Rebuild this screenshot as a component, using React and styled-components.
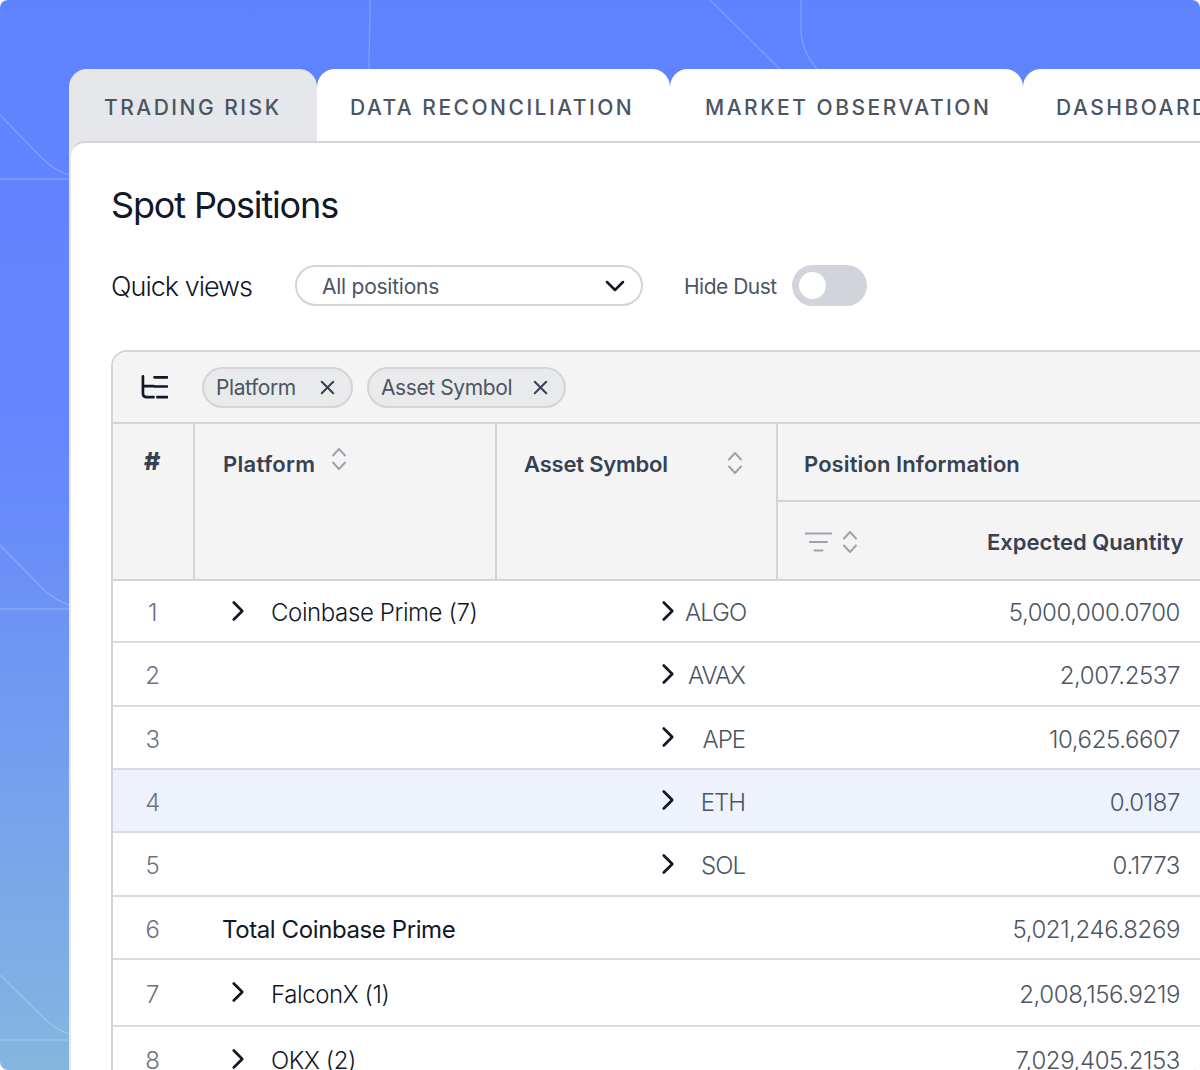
import React from "react";
import styled, { createGlobalStyle } from "styled-components";
import { ChevronDown, ChevronRight, X } from "lucide-react";

const GlobalStyle = createGlobalStyle`
  html, body {
    margin: 0;
    padding: 0;
    background: white;
  }
  body {
    font-family: "Inter", "Liberation Sans", sans-serif;
  }
`;

const COLUMNS = "82px 302px 281px 440px";

const rows = [
  { id: 1, platform: "Coinbase Prime (7)", expandable: true, asset: "ALGO", quantity: "5,000,000.0700", height: 62 },
  { id: 2, asset: "AVAX", quantity: "2,007.2537", height: 64 },
  { id: 3, asset: "APE", quantity: "10,625.6607", height: 63 },
  { id: 4, asset: "ETH", quantity: "0.0187", height: 63, selected: true },
  { id: 5, asset: "SOL", quantity: "0.1773", height: 64 },
  { id: 6, total: "Total Coinbase Prime", quantity: "5,021,246.8269", height: 63 },
  { id: 7, platform: "FalconX (1)", expandable: true, quantity: "2,008,156.9219", height: 67 },
  { id: 8, platform: "OKX (2)", expandable: true, quantity: "7,029,405.2153", height: 66 },
];

const tabs = [
  { label: "TRADING RISK", width: 248, pad: 35, active: true },
  { label: "DATA RECONCILIATION", width: 353, pad: 33 },
  { label: "MARKET OBSERVATION", width: 353, pad: 35 },
  { label: "DASHBOARD", width: 300, pad: 33 },
];

function App() {
  return (
    <>
      <GlobalStyle />
      <Page>
        <Lines viewBox="0 0 1200 1070" fill="none">
          <path d="M370 0 C371 10 369 20 369 69" />
          <path d="M710 0 L780 69" />
          <path d="M801 0 V30 C801 45 808 58 817 69" />
          <path d="M0 115 L42 158 C50 166 58 172 69 175 M0 179 H69" />
          <path d="M0 545 L44 590 C52 597 60 602 69 605 M0 609 H69" />
          <path d="M0 975 L44 1018 C52 1026 60 1031 69 1034 M0 1040 H69" />
        </Lines>
        <TabBar>
          {tabs.map((tab) => (
            <Tab key={tab.label} $active={tab.active} $width={tab.width} $pad={tab.pad}>
              {tab.label}
            </Tab>
          ))}
        </TabBar>
        <Panel>
          <Title>Spot Positions</Title>
          <Controls>
            <ViewsLabel>Quick views</ViewsLabel>
            <Select>
              <SelectValue>All positions</SelectValue>
              <ChevronDown size={32} strokeWidth={1.9} color="#111827" />
            </Select>
            <DustLabel>Hide Dust</DustLabel>
            <Toggle>
              <Knob />
            </Toggle>
          </Controls>
          <TableCard>
            <Toolbar>
              <GroupIcon />
              <Chip $width={151}>
                Platform
                <X size={23} strokeWidth={2.1} color="#374151" />
              </Chip>
              <Chip $width={199}>
                Asset Symbol
                <X size={23} strokeWidth={2.1} color="#374151" />
              </Chip>
            </Toolbar>
            <TableHead>
              <HashCell>#</HashCell>
              <PlatformHead>
                Platform
                <SortIcon />
              </PlatformHead>
              <AssetHead>
                Asset Symbol
                <SortIcon />
              </AssetHead>
              <GroupHead>
                <GroupTitle>Position Information</GroupTitle>
                <SubHead>
                  <FilterIcon />
                  <SortIcon />
                  <SubHeadLabel>Expected Quantity</SubHeadLabel>
                </SubHead>
              </GroupHead>
            </TableHead>
            {rows.map((row) => (
              <Row key={row.id} $height={row.height} $selected={row.selected}>
                <RowNumber>{row.id}</RowNumber>
                {row.total ? (
                  <TotalCell>{row.total}</TotalCell>
                ) : (
                  <>
                    <PlatformCell>
                      {row.expandable && (
                        <>
                          <Chevron size={34} strokeWidth={1.9} />
                          {row.platform}
                        </>
                      )}
                    </PlatformCell>
                    <AssetCell>
                      {row.asset && (
                        <>
                          <Chevron size={34} strokeWidth={1.9} />
                          <AssetName>{row.asset}</AssetName>
                        </>
                      )}
                    </AssetCell>
                  </>
                )}
                <QuantityCell>{row.quantity}</QuantityCell>
              </Row>
            ))}
          </TableCard>
        </Panel>
      </Page>
    </>
  );
}

function SortIcon() {
  return (
    <SortSvg viewBox="0 0 16 24" fill="none">
      <path d="M2 8.5 L8 2 L14 8.5 M2 15.5 L8 22 L14 15.5" />
    </SortSvg>
  );
}

function FilterIcon() {
  return (
    <FilterSvg viewBox="0 0 27 20" fill="none">
      <path d="M0 1.5 H27 M5 10 H22 M9.5 18.5 H17.5" />
    </FilterSvg>
  );
}

function GroupIcon() {
  return (
    <GroupSvg viewBox="0 0 28 24" fill="none">
      <path d="M2 1 V18.5 Q2 22.5 6 22.5 H13 M2 11 H13 M14 2 H27 M14 11.5 H27 M17 22.5 H27" />
    </GroupSvg>
  );
}

const Page = styled.div`
  position: relative;
  width: 1200px;
  height: 1070px;
  overflow: hidden;
  border-radius: 8px;
  box-sizing: border-box;
  padding: 69px 0 0 69px;
  background: linear-gradient(180deg, #5f82ff 0%, #6487fd 42%, #84b6df 100%);
`;

const Lines = styled.svg`
  position: absolute;
  inset: 0;
  width: 1200px;
  height: 1070px;

  path {
    stroke: rgba(255, 255, 255, 0.2);
    stroke-width: 1.5;
  }
`;

const TabBar = styled.div`
  position: relative;
  display: flex;
  width: 1300px;
  height: 72px;
`;

const Tab = styled.div`
  flex: 0 0 ${(p) => p.$width}px;
  box-sizing: border-box;
  height: 88px;
  padding: 27px 0 0 ${(p) => p.$pad}px;
  border-radius: 18px 18px 0 0;
  background: ${(p) => (p.$active ? "#e5e7eb" : "#ffffff")};
  color: #4b5563;
  font-size: 21px;
  font-weight: 500;
  line-height: 24px;
  letter-spacing: 2.5px;
  white-space: nowrap;
`;

const Panel = styled.div`
  position: relative;
  width: 1300px;
  height: 1000px;
  box-sizing: border-box;
  padding: 41px 0 0 40px;
  background: #ffffff;
  border-top: 2px solid #d4d4d8;
  border-left: 2px solid #e5e7eb;
  border-radius: 16px 0 0 0;
`;

const Title = styled.h1`
  margin: 0;
  color: #111827;
  font-size: 36px;
  font-weight: 400;
  line-height: 42px;
  letter-spacing: -1.15px;
`;

const Controls = styled.div`
  display: flex;
  align-items: center;
  margin-top: 39px;
  height: 41px;
`;

const ViewsLabel = styled.span`
  width: 184px;
  padding-top: 2px;
  color: #111827;
  font-size: 27px;
  font-weight: 300;
  letter-spacing: -1px;
`;

const Select = styled.div`
  display: flex;
  align-items: center;
  justify-content: space-between;
  box-sizing: border-box;
  width: 348px;
  height: 41px;
  padding: 0 10px 0 25px;
  border: 2px solid #d4d4d8;
  border-radius: 21px;
  color: #4b5563;
  font-size: 21px;
  letter-spacing: -0.25px;
`;

const SelectValue = styled.span`
  padding-top: 2px;
`;

const DustLabel = styled.span`
  margin-left: 41px;
  padding-top: 2px;
  color: #4b5563;
  font-size: 21px;
  letter-spacing: -0.5px;
`;

const Toggle = styled.div`
  display: flex;
  align-items: center;
  box-sizing: border-box;
  width: 75px;
  height: 41px;
  margin-left: 15px;
  padding-left: 7px;
  border-radius: 21px;
  background: #d1d5db;
`;

const Knob = styled.div`
  width: 27px;
  height: 27px;
  border-radius: 50%;
  background: #ffffff;
`;

const TableCard = styled.div`
  width: 1150px;
  margin-top: 44px;
  border: 2px solid #d4d4d8;
  border-right: none;
  border-bottom: none;
  border-radius: 16px 0 0 0;
  overflow: hidden;
`;

const Toolbar = styled.div`
  display: flex;
  align-items: center;
  gap: 14px;
  box-sizing: border-box;
  height: 70px;
  padding-left: 28px;
  background: #f4f4f5;
`;

const GroupSvg = styled.svg`
  width: 27px;
  height: 24px;
  margin-right: 20px;

  path {
    stroke: #111827;
    stroke-width: 2.8;
    stroke-linecap: round;
  }
`;

const Chip = styled.div`
  display: flex;
  align-items: center;
  justify-content: space-between;
  box-sizing: border-box;
  width: ${(p) => p.$width}px;
  height: 41px;
  padding: 0 12px 0 12px;
  border: 2px solid #d4d4d8;
  border-radius: 21px;
  background: #e9eaec;
  color: #4b5563;
  font-size: 21px;
  letter-spacing: -0.4px;
`;

const TableHead = styled.div`
  display: grid;
  grid-template-columns: ${COLUMNS};
  height: 159px;
  background: #f4f4f5;
  border-top: 2px solid #d4d4d8;
  border-bottom: 2px solid #d4d4d8;
  box-sizing: border-box;
`;

const HeadCell = styled.div`
  display: flex;
  align-items: flex-start;
  box-sizing: border-box;
  border-right: 2px solid #d4d4d8;
  color: #374151;
  font-size: 22px;
  font-weight: 600;
  line-height: 28px;
  letter-spacing: -0.2px;
`;

const HashCell = styled(HeadCell)`
  justify-content: center;
  padding-top: 23px;
  padding-right: 2px;
  font-size: 25px;
  font-weight: 800;
`;

const PlatformHead = styled(HeadCell)`
  gap: 16px;
  padding: 26px 0 0 28px;
  letter-spacing: 0.3px;

  svg {
    margin-top: -3px;
  }
`;

const AssetHead = styled(HeadCell)`
  justify-content: space-between;
  padding: 26px 33px 0 27px;

  svg {
    margin-top: 1px;
  }
`;

const GroupHead = styled.div`
  display: flex;
  flex-direction: column;
  color: #374151;
  font-size: 22px;
  font-weight: 600;
`;

const GroupTitle = styled.div`
  display: flex;
  align-items: center;
  box-sizing: border-box;
  height: 78px;
  padding: 3px 0 0 26px;
  border-bottom: 2px solid #d4d4d8;
  letter-spacing: 0.1px;
`;

const SubHead = styled.div`
  display: flex;
  align-items: center;
  flex: 1;
  padding: 3px 0 0 27px;
`;

const SubHeadLabel = styled.span`
  margin-left: 129px;
`;

const SortSvg = styled.svg`
  flex: none;
  width: 16px;
  height: 24px;

  path {
    stroke: #9ca3af;
    stroke-width: 2;
    stroke-linecap: round;
    stroke-linejoin: round;
  }
`;

const FilterSvg = styled.svg`
  flex: none;
  width: 27px;
  height: 20px;
  margin-right: 10px;

  path {
    stroke: #9ca3af;
    stroke-width: 2;
    stroke-linecap: round;
  }
`;

const Row = styled.div`
  display: grid;
  grid-template-columns: ${COLUMNS};
  align-items: center;
  box-sizing: border-box;
  height: ${(p) => p.$height}px;
  padding-top: 3px;
  border-bottom: 2px solid #d9dbdf;
  background: ${(p) => (p.$selected ? "#eef2fd" : "#ffffff")};
  color: #4b5563;
  font-size: 24px;
  font-weight: 300;
  letter-spacing: -0.4px;
`;

const RowNumber = styled.div`
  text-align: center;
  color: #6b7280;
  padding-right: 3px;
`;

const PlatformCell = styled.div`
  display: flex;
  align-items: center;
  gap: 16px;
  padding-left: 26px;
  color: #111827;
`;

const Chevron = styled(ChevronRight)`
  flex: none;
  color: #111827;
  margin: -6px 0 -2px;
`;

const AssetCell = styled.div`
  display: flex;
  align-items: center;
  padding-left: 154px;
`;

const AssetName = styled.span`
  flex: 1;
  text-align: right;
  padding-right: 33px;
  letter-spacing: -1px;
`;

const TotalCell = styled.div`
  grid-column: 2 / 4;
  padding-left: 27px;
  color: #111827;
  font-weight: 400;
`;

const QuantityCell = styled.div`
  box-sizing: border-box;
  width: 422px;
  padding-right: 20px;
  text-align: right;
`;

export default App;
